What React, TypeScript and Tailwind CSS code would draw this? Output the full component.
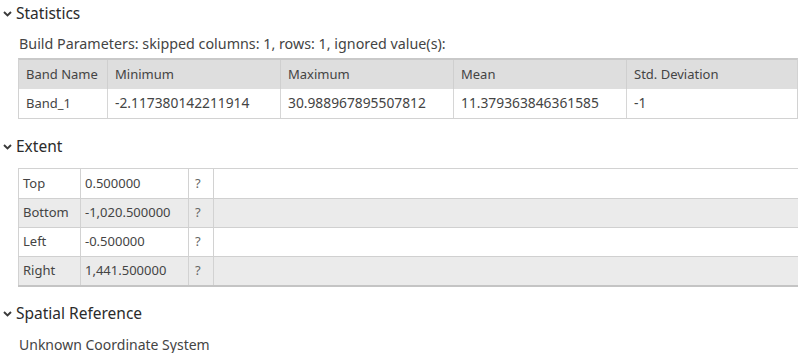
import { FunctionComponent } from 'react';

const stats = {
    headers: ['Band Name', 'Minimum', 'Maximum', 'Mean', 'Std. Deviation'],
    widths: ['w-[88px]', 'w-[173px]', 'w-[173px]', 'w-[173px]', 'w-[173px]'],
    row: ['Band_1', '-2.117380142211914', '30.988967895507812', '11.379363846361585', '-1'],
};

const extent = [
    { label: 'Top', value: '0.500000' },
    { label: 'Bottom', value: '-1,020.500000' },
    { label: 'Left', value: '-0.500000' },
    { label: 'Right', value: '1,441.500000' },
];

const Chevron: FunctionComponent = () => (
    <svg width="9" height="6" viewBox="0 0 9 6" className="shrink-0">
        <path d="M1 1 L4.5 4.5 L8 1" fill="none" stroke="#3a3a3a" strokeWidth="1.9" />
    </svg>
);

const SectionHeading: FunctionComponent<{ title: string; className?: string }> = ({ title, className }) => (
    <div className={`flex items-center gap-[4px] pl-[3px] h-[28px] ${className ?? ''}`}>
        <Chevron />
        <h2 className="text-[15.5px] text-[#2b2b2b]">{title}</h2>
    </div>
);

const App: FunctionComponent = () => {
    return (
        <div
            className="w-[802px] h-[353px] bg-white text-[13px] text-[#444] overflow-hidden"
            style={{ fontFamily: '"Noto Sans", "Open Sans", sans-serif' }}
        >
            <SectionHeading title="Statistics" />
            <p className="h-[30px] leading-[32px] pl-[19px] text-[14.3px]">
                Build Parameters: skipped columns: 1, rows: 1, ignored value(s):
            </p>
            <div className="ml-[18px] w-[780px] border-t-2 border-t-[#c9c9c9] border-l border-r border-b border-[#d2d2d2]">
                <div className="flex h-[29px] bg-[#dedede]">
                    {stats.headers.map((h, i) => (
                        <div
                            key={h}
                            className={`${stats.widths[i]} shrink-0 flex items-center pl-[7px] ${i > 0 ? 'border-l border-[#cfcfcf]' : ''}`}
                        >
                            {h}
                        </div>
                    ))}
                </div>
                <div className="flex h-[29px]">
                    {stats.row.map((v, i) => (
                        <div
                            key={i}
                            className={`${stats.widths[i]} shrink-0 flex items-center pl-[7px] ${i > 0 ? 'border-l border-[#d6d6d6] text-[13.8px]' : ''}`}
                        >
                            {v}
                        </div>
                    ))}
                </div>
            </div>

            <SectionHeading title="Extent" className="mt-[14px]" />
            <div className="ml-[18px] mt-[7px] w-[780px] border-t border-[#d2d2d2] border-b-2 border-b-[#c4c4c4]">
                {extent.map((r, i) => (
                    <div
                        key={r.label}
                        className={`flex h-[29px] ${i > 0 ? 'border-t border-[#d0d0d0]' : ''} ${i % 2 === 1 ? 'bg-[#ebebeb]' : 'bg-white'}`}
                    >
                        <div className="w-[62px] shrink-0 flex items-center pl-[4px] border-l border-[#d2d2d2]">{r.label}</div>
                        <div className="w-[108px] shrink-0 flex items-center pl-[4px] border-l border-[#d2d2d2]">{r.value}</div>
                        <div className="w-[25px] shrink-0 flex items-center pl-[6px] border-l border-[#d2d2d2] text-[#666]">?</div>
                        <div className="flex-1 border-l border-[#d2d2d2]" />
                    </div>
                ))}
            </div>

            <SectionHeading title="Spatial Reference" className="mt-[13px]" />
            <p className="mt-[7px] leading-[19px] pl-[19px] text-[14px] whitespace-nowrap">Unknown Coordinate System</p>
        </div>
    );
};

export default App;
